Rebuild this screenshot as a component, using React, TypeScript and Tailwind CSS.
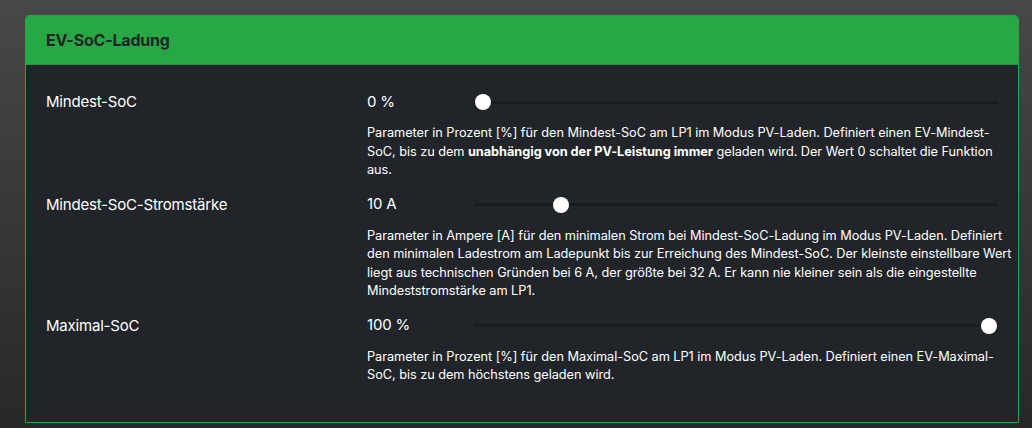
import React from "react";

type Setting = {
  label: string;
  value: string;
  min: number;
  max: number;
  current: number;
  lines: React.ReactNode[];
};

const settings: Setting[] = [
  {
    label: "Mindest-SoC",
    value: "0 %",
    min: 0,
    max: 100,
    current: 0,
    lines: [
      "Parameter in Prozent [%] für den Mindest-SoC am LP1 im Modus PV-Laden. Definiert einen EV-Mindest-",
      <>
        SoC, bis zu dem <b className="font-bold">unabhängig von der PV-Leistung immer</b> geladen wird. Der Wert 0
        schaltet die Funktion
      </>,
      "aus.",
    ],
  },
  {
    label: "Mindest-SoC-Stromstärke",
    value: "10 A",
    min: 6,
    max: 32,
    current: 10,
    lines: [
      "Parameter in Ampere [A] für den minimalen Strom bei Mindest-SoC-Ladung im Modus PV-Laden. Definiert",
      "den minimalen Ladestrom am Ladepunkt bis zur Erreichung des Mindest-SoC. Der kleinste einstellbare Wert",
      "liegt aus technischen Gründen bei 6 A, der größte bei 32 A. Er kann nie kleiner sein als die eingestellte",
      "Mindeststromstärke am LP1.",
    ],
  },
  {
    label: "Maximal-SoC",
    value: "100 %",
    min: 0,
    max: 100,
    current: 100,
    lines: [
      "Parameter in Prozent [%] für den Maximal-SoC am LP1 im Modus PV-Laden. Definiert einen EV-Maximal-",
      "SoC, bis zu dem höchstens geladen wird.",
    ],
  },
];

function Slider({ min, max, current }: { min: number; max: number; current: number }) {
  const pct = (current - min) / (max - min);
  return (
    <div className="relative flex-1 h-4 flex items-center">
      <div className="w-full h-[3px] bg-[#191b1e]" />
      <div
        className="absolute top-0 w-4 h-4 rounded-full bg-white"
        style={{ left: `calc(${pct} * (100% - 18px) + 1px)` }}
      />
    </div>
  );
}

export default function App() {
  return (
    <div
      className="min-h-[428px] w-full bg-gradient-to-b from-[#484848] to-[#282828] pt-[15px] pl-[25px] pr-[13px] pb-[7px]"
      style={{ fontFamily: "Inter, 'Liberation Sans', Arial, sans-serif" }}
    >
      <div className="border border-[#28a745] rounded-t-[4px] bg-[#212529]">
        <div className="bg-[#28a745] px-5 py-3 border-b border-[#23963d] rounded-t-[3px]">
          <h2 className="text-[16px] leading-6 font-bold text-[#212529] tracking-[-0.2px]">EV-SoC-Ladung</h2>
        </div>
        <div className="px-5 pt-[25px] pb-[37px] flex flex-col">
          {settings.map((s, i) => (
            <div key={s.label} className={i === 0 ? "flex" : "flex mt-[13px]"}>
              <div className="w-[321px] shrink-0 text-[15px] leading-6 text-white tracking-[-0.2px]">{s.label}</div>
              <div className="flex-1 flex flex-col min-w-0">
                <div className="flex items-center h-6">
                  <div className="w-[107px] shrink-0 text-[15px] text-white tracking-[-0.2px]">{s.value}</div>
                  <Slider min={s.min} max={s.max} current={s.current} />
                </div>
                <p className="mt-[10px] text-[12.75px] leading-[18.5px] text-white tracking-[-0.05px]">
                  {s.lines.map((l, j) => (
                    <span key={j} className="block whitespace-nowrap">
                      {l}
                    </span>
                  ))}
                </p>
              </div>
            </div>
          ))}
        </div>
      </div>
    </div>
  );
}
